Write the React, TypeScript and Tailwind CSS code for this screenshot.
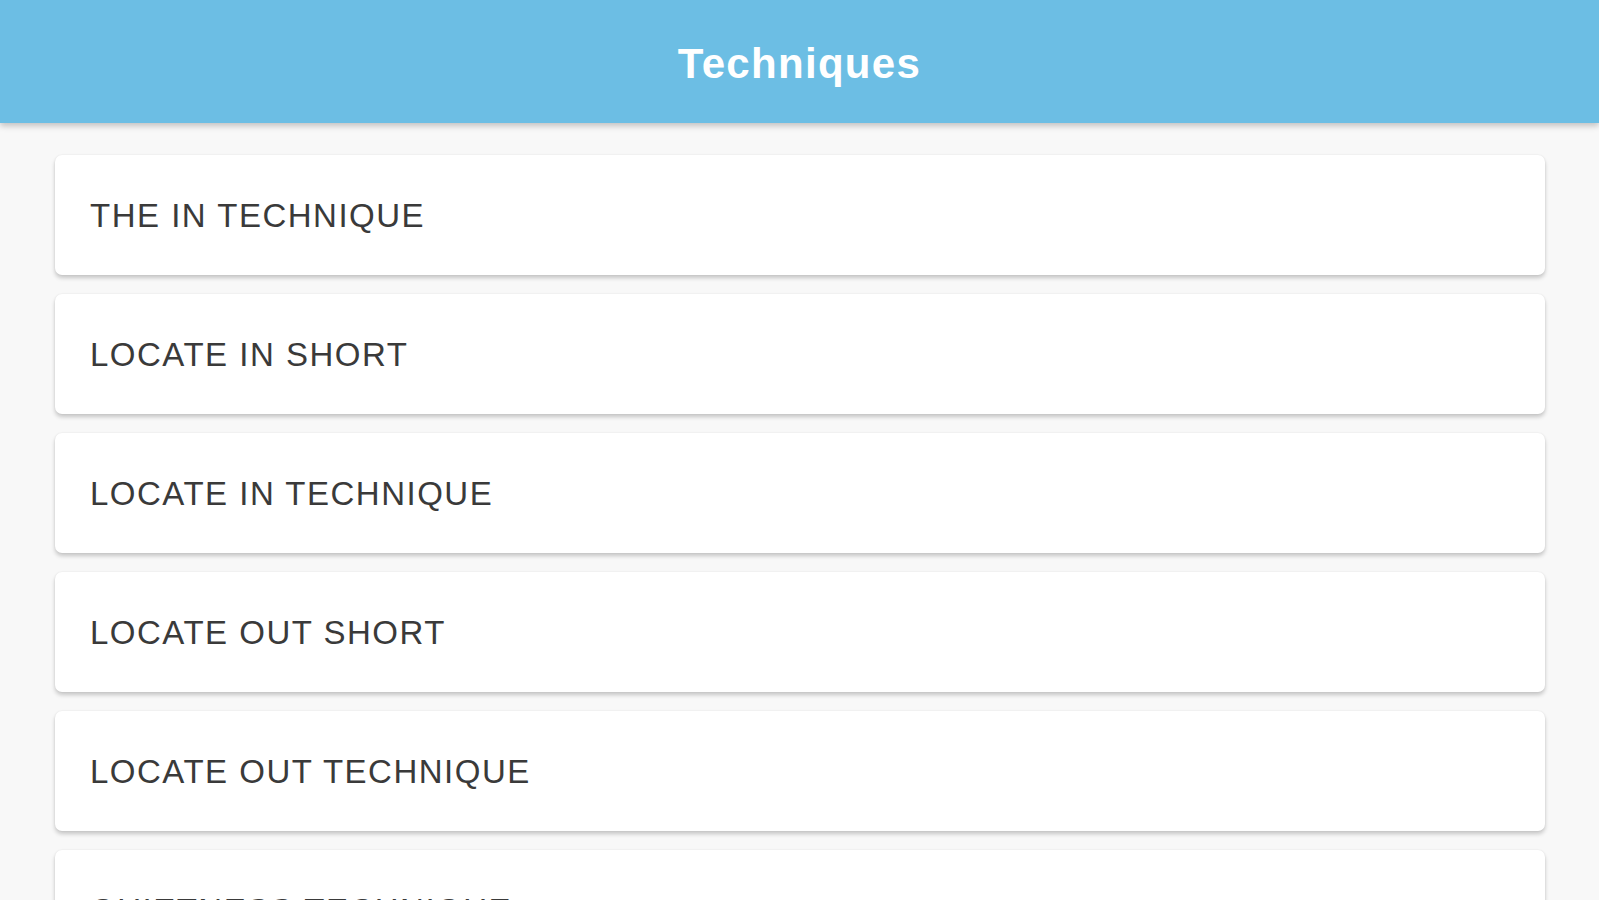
import React from "react";

const items = [
  "THE IN TECHNIQUE",
  "LOCATE IN SHORT",
  "LOCATE IN TECHNIQUE",
  "LOCATE OUT SHORT",
  "LOCATE OUT TECHNIQUE",
  "QUIETNESS TECHNIQUE",
];

export default function App() {
  return (
    <div
      className="w-[1599px] h-[900px] overflow-hidden bg-[#f8f8f8] flex flex-col"
      style={{ fontFamily: "'Liberation Sans', Arial, sans-serif" }}
    >
      <header className="relative z-10 h-[123px] shrink-0 bg-[#6cbee4] flex items-center justify-center pt-[4px] shadow-[0_3px_6px_rgba(0,0,0,0.22)]">
        <h1 className="text-white text-[42px] font-bold tracking-[1.3px] leading-none">
          Techniques
        </h1>
      </header>
      <main className="flex flex-col gap-[19px] pt-[32px] pl-[55px] pr-[54px]">
        {items.map((t) => (
          <div
            key={t}
            className="h-[120px] shrink-0 bg-white rounded-[7px] shadow-[0_3px_4px_rgba(0,0,0,0.2),0_0_2px_rgba(0,0,0,0.08)] flex items-center pl-[35px]"
          >
            <span className="text-[#3a3a3a] text-[33px] tracking-[1.5px] leading-none">
              {t}
            </span>
          </div>
        ))}
      </main>
    </div>
  );
}
